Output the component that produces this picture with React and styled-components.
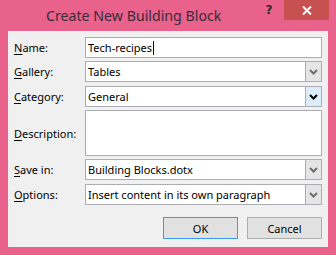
import React from "react";
import styled, { createGlobalStyle } from "styled-components";

const Global = createGlobalStyle`
  html, body {
    margin: 0;
    padding: 0;
    background: #e8628b;
  }
  body {
    font-family: "Noto Sans", "Open Sans", sans-serif;
  }
`

const Window = styled.div`
  width: 336px;
  height: 255px;
  box-sizing: border-box;
  background: #e8628b;
  padding: 0 8px 8px 8px;
  display: flex;
  flex-direction: column;
`
const TitleBar = styled.div`
  height: 31px;
  display: flex;
  align-items: flex-start;
  margin: 0 -1px 0 0;
`
const Title = styled.div`
  flex: 1;
  padding: 6px 0 0 38px;
  font-size: 14.2px;
  color: #3b2b3a;
  white-space: nowrap;
`
const HelpButton = styled.div`
  width: 26px;
  height: 20px;
  font-family: "DejaVu Sans", sans-serif;
  font-weight: bold;
  font-size: 12px;
  color: #2a2a2a;
  display: flex;
  justify-content: center;
  align-items: center;
  margin-right: 2px;
`
const CloseButton = styled.div`
  width: 45px;
  height: 20px;
  background: #c75050;
  display: flex;
  justify-content: center;
  align-items: center;
`
const Client = styled.div`
  flex: 1;
  background: #f0f0f0;
  padding: 6px 6px 8px 6px;
  display: flex;
  flex-direction: column;
`
const Row = styled.div`
  display: grid;
  grid-template-columns: 71px 237px;
  align-items: center;
  height: ${p => p.$h || 21}px;
  margin-top: ${p => p.$mt || 0}px;
`
const Label = styled.label`
  font-size: 11px;
  color: #000;
  white-space: nowrap;
  u {
    text-decoration: underline;
    text-underline-offset: 2px;
  }
`
const Field = styled.div`
  height: 100%;
  box-sizing: border-box;
  border: 1px solid #abadb3;
  background: #fff;
  display: flex;
  align-items: center;
  font-size: 11px;
  color: #000;
  padding-left: 2px;
  white-space: nowrap;
  overflow: hidden;
`
const Caret = styled.span`
  display: inline-block;
  width: 1px;
  height: 14px;
  background: #000;
  margin-left: 1px;
`
const Text = styled.span`
  flex: 1;
`
const DropButton = styled.div`
  width: 17px;
  height: calc(100% + 2px);
  margin-right: -1px;
  box-sizing: border-box;
  border: 1px solid ${p => (p.$focus ? "#7eb4ea" : "#acacac")};
  background: ${p => (p.$focus ? "#dcecfc" : "#e5e5e5")};
  display: flex;
  justify-content: center;
  align-items: center;
`
const ButtonRow = styled.div`
  display: flex;
  justify-content: flex-end;
  gap: 9px;
  margin-top: 12px;
`
const Button = styled.div`
  width: 75px;
  height: 22px;
  box-sizing: border-box;
  border: 1px solid ${p => (p.$default ? "#3c9af0" : "#adadad")};
  background: #e1e1e1;
  font-size: 11px;
  display: flex;
  justify-content: center;
  align-items: center;
  color: #000;
`

function Chevron({ focus }) {
  return (
    <svg width="9" height="6" viewBox="0 0 9 6">
      <polyline
        points="1,1 4.5,4.5 8,1"
        fill="none"
        stroke={focus ? "#000" : "#6d6d6d"}
        strokeWidth="2"
      />
    </svg>
  );
}

function Combo({ value, focus }) {
  return (
    <Field>
      <Text>{value}</Text>
      <DropButton $focus={focus}>
        <Chevron focus={focus} />
      </DropButton>
    </Field>
  );
}

export default function App() {
  return (
    <Window>
      <Global />
      <TitleBar>
        <Title>Create New Building Block</Title>
        <HelpButton>?</HelpButton>
        <CloseButton>
          <svg width="10" height="9" viewBox="0 0 10 9">
            <path d="M1 0.5 L9 8.5 M9 0.5 L1 8.5" stroke="#fff" strokeWidth="2" />
          </svg>
        </CloseButton>
      </TitleBar>
      <Client>
        <Row>
          <Label><u>N</u>ame:</Label>
          <Field>
            <span>Tech-recipes</span>
            <Caret />
          </Field>
        </Row>
        <Row $mt={3}>
          <Label><u>G</u>allery:</Label>
          <Combo value="Tables" />
        </Row>
        <Row $mt={4}>
          <Label><u>C</u>ategory:</Label>
          <Combo value="General" focus />
        </Row>
        <Row $mt={3} $h={46}>
          <Label><u>D</u>escription:</Label>
          <Field />
        </Row>
        <Row $mt={3}>
          <Label><u>S</u>ave in:</Label>
          <Combo value="Building Blocks.dotx" />
        </Row>
        <Row $mt={4}>
          <Label><u>O</u>ptions:</Label>
          <Combo value="Insert content in its own paragraph" />
        </Row>
        <ButtonRow>
          <Button $default>OK</Button>
          <Button>Cancel</Button>
        </ButtonRow>
      </Client>
    </Window>
  );
}
